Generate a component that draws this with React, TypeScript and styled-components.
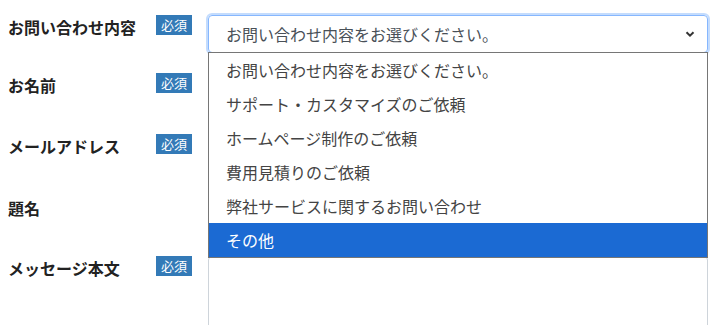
import React from "react";
import styled, { createGlobalStyle } from "styled-components";

const Global = createGlobalStyle`
  html, body { margin: 0; padding: 0; background: #fff; }
  body { font-family: "Noto Sans CJK JP", "Noto Sans", sans-serif; overflow: hidden; }
`;

const Form = styled.div`
  position: relative;
  padding: 0 17px 0 8px;
  width: 725px;
  height: 325px;
  box-sizing: border-box;
  overflow: hidden;
`;

const Row = styled.div<{ $mt: number }>`
  display: flex;
  align-items: flex-start;
  margin-top: ${(p) => p.$mt}px;
`;

const LabelCell = styled.div`
  width: 200px;
  flex: none;
  display: flex;
  align-items: flex-start;
`;

const Label = styled.span`
  font-size: 16px;
  line-height: 24px;
  font-weight: 700;
  color: #222;
  flex: 1;
`;

const Badge = styled.span`
  width: 36px;
  height: 20px;
  margin-right: 16px;
  background: #337ab7;
  color: #fff;
  font-size: 13px;
  line-height: 20px;
  text-align: center;
  flex: none;
`;

const Field = styled.div`
  flex: 1;
  position: relative;
`;

const SelectBox = styled.div`
  height: 38px;
  box-sizing: border-box;
  border: 1px solid #86b7fe;
  border-radius: 4px;
  box-shadow: 0 0 0 2px #c4dcfd;
  display: flex;
  align-items: center;
  padding: 0 12px 0 17px;
  font-size: 16px;
  color: #495057;
`;

const SelectText = styled.span`
  flex: 1;
`;

const Input = styled.div`
  height: 38px;
  box-sizing: border-box;
  border: 1px solid #ced4da;
  border-radius: 4px;
`;

const TextArea = styled.div`
  height: 200px;
  box-sizing: border-box;
  border: 1px solid #ced4da;
  border-radius: 4px;
`;

const Menu = styled.div`
  position: absolute;
  top: 52px;
  left: 208px;
  width: 500px;
  box-sizing: border-box;
  border: 1px solid #767676;
  background: #fff;
  z-index: 5;
`;

const Option = styled.div<{ $active?: boolean }>`
  height: 34px;
  display: flex;
  align-items: center;
  padding-left: 17px;
  font-size: 16px;
  color: ${(p) => (p.$active ? "#fff" : "#444")};
  background: ${(p) => (p.$active ? "#1b6ad3" : "#fff")};
`;

const options = [
  "お問い合わせ内容をお選びください。",
  "サポート・カスタマイズのご依頼",
  "ホームページ制作のご依頼",
  "費用見積りのご依頼",
  "弊社サービスに関するお問い合わせ",
  "その他",
];

const Chevron = () => (
  <svg width="10" height="8" viewBox="0 0 10 8">
    <path d="M1.5 2.2 L5 5.6 L8.5 2.2" fill="none" stroke="#333" strokeWidth="2" />
  </svg>
);

export default function App() {
  return (
    <>
      <Global />
      <Form>
        <Row $mt={15}>
          <LabelCell>
            <Label>お問い合わせ内容</Label>
            <Badge>必須</Badge>
          </LabelCell>
          <Field>
            <SelectBox>
              <SelectText>お問い合わせ内容をお選びください。</SelectText>
              <Chevron />
            </SelectBox>
          </Field>
        </Row>
        <Row $mt={20}>
          <LabelCell>
            <Label>お名前</Label>
            <Badge>必須</Badge>
          </LabelCell>
          <Field>
            <Input />
          </Field>
        </Row>
        <Row $mt={23}>
          <LabelCell>
            <Label>メールアドレス</Label>
            <Badge>必須</Badge>
          </LabelCell>
          <Field>
            <Input />
          </Field>
        </Row>
        <Row $mt={24}>
          <LabelCell>
            <Label>題名</Label>
          </LabelCell>
          <Field>
            <Input />
          </Field>
        </Row>
        <Row $mt={22}>
          <LabelCell>
            <Label>メッセージ本文</Label>
            <Badge>必須</Badge>
          </LabelCell>
          <Field>
            <TextArea />
          </Field>
        </Row>
        <Menu>
          {options.map((o, i) => (
            <Option key={o} $active={i === options.length - 1}>
              {o}
            </Option>
          ))}
        </Menu>
      </Form>
    </>
  );
}
